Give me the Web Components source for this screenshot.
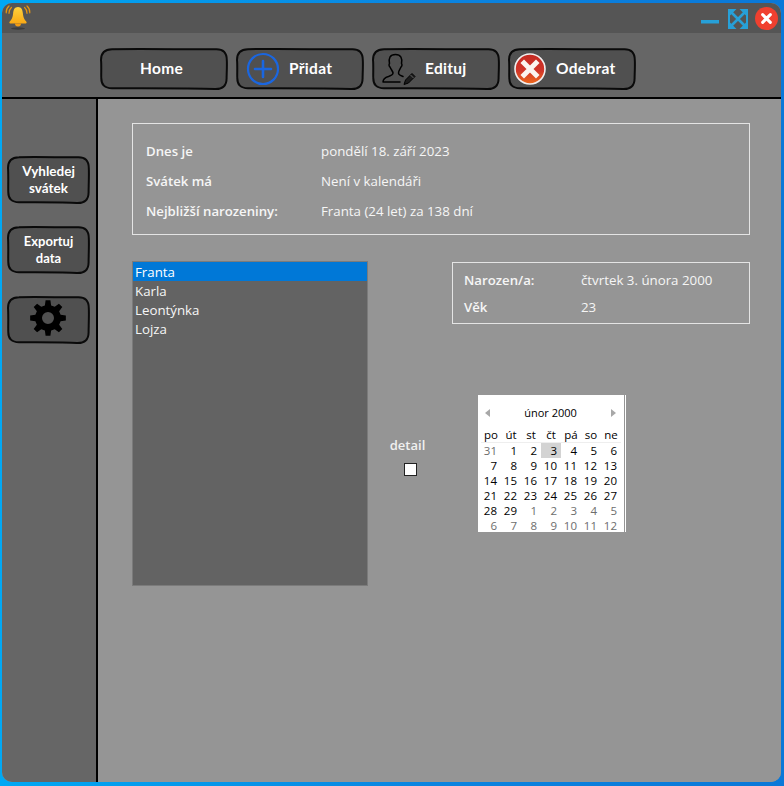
<!DOCTYPE html>
<html lang="cs"><head><meta charset="utf-8"><title>Svátky</title>
<style>
html,body{margin:0;padding:0;height:100%;background:#0a84dc}
body{font-family:"Open Sans","Noto Sans",sans-serif}
</style></head><body>
<app-window>
  <title-bar slot="title"></title-bar>
  <tool-bar slot="tools">
    <sketch-button w="128" h="42" label="Home"></sketch-button>
    <sketch-button w="128" h="42" label="Přidat" icon="plus"></sketch-button>
    <sketch-button w="128" h="42" label="Edituj" icon="user"></sketch-button>
    <sketch-button w="128" h="42" label="Odebrat" icon="x"></sketch-button>
  </tool-bar>
  <side-bar slot="side">
    <sketch-button w="83" h="48" small label="Vyhledej svátek" style="font-size:13.500px"></sketch-button>
    <sketch-button w="83" h="48" small label="Exportuj data"></sketch-button>
    <sketch-button w="83" h="48" icon="gear"></sketch-button>
  </side-bar>
  <main-panel slot="main"></main-panel>
</app-window>
<script>
const t=(html)=>{const e=document.createElement('template');e.innerHTML=html;return e};
class Base extends HTMLElement{
  constructor(){super();this.attachShadow({mode:'open'}).appendChild(this.constructor.tpl.content.cloneNode(true))}
}
class AppWindow extends Base{
  static tpl=t(`<style>
  :host{display:block;width:784px;height:786px;box-sizing:border-box;padding:3px 3px 4px 2px;background:linear-gradient(90deg,#00a8f4 0%,#0a84e0 55%,#0a78d8 100%);overflow:hidden}
  .win{height:100%;border-radius:10px;overflow:hidden;background:#959595;display:grid;grid-template-columns:96px 1fr;grid-template-rows:30px 64px 2px 1fr;}
  .t{grid-column:1/3}.b{grid-column:1/3}
  .line{grid-column:1/3;background:#000}
  .side{display:flex;min-height:0}
  .main{display:flex;min-height:0;min-width:0}
  ::slotted(*){flex:1}
  </style><div class="win"><div class="t"><slot name="title"></slot></div><div class="b"><slot name="tools"></slot></div><div class="line"></div><div class="side"><slot name="side"></slot></div><div class="main"><slot name="main"></slot></div></div>`);
}
class TitleBar extends Base{
  static tpl=t(`<style>
  :host{display:flex;height:30px;background:#555;align-items:flex-start;justify-content:space-between}
  .bell{margin:1px 0 0 3px;display:block}
  .ctl{display:flex;align-items:center;margin:4px 3px 0 0;}
  svg{display:block}
  </style>
  <svg class="bell" width="26" height="27" viewBox="0 0 26 27" aria-label="zvonek">
    <defs><linearGradient id="g" x1="0" x2="0" y1="0" y2="1"><stop offset="0" stop-color="#ffd23e"/><stop offset="1" stop-color="#f9a914"/></linearGradient></defs>
    <ellipse cx="13" cy="24.500" rx="7" ry="1.200" fill="#3c3c3c"/>
    <path d="M13 3c-3.400 0-4.600 2.800-4.900 6.500-.3 3.900-1.300 6-3.500 8.300-.5.600-.2 1.700.6 1.700h15.600c.8 0 1.100-1.100.6-1.700-2.200-2.300-3.200-4.400-3.500-8.300C17.600 5.800 16.400 3 13 3z" fill="url(#g)"/>
    <path d="M10 19.500a3 3 0 0 0 6 0z" fill="#f39c12"/>
    <g fill="none" stroke="#e8950f" stroke-width="1.200" stroke-linecap="round"><path d="M6.400 3.500C4.700 5 3.900 7 4 9.300"/><path d="M4 2C2 3.800 1 6.200 1.200 8.800"/><path d="M19.600 3.500C21.300 5 22.100 7 22 9.300"/><path d="M22 2c2 1.800 3 4.200 2.800 6.800"/></g>
  </svg>
  <div class="ctl">
    <svg width="18" height="23" viewBox="0 0 18 23" style="margin-right:9px"><rect x="0" y="13" width="18" height="3.500" fill="#27a0d8"/></svg>
    <svg width="20" height="20" viewBox="0 0 20 20" style="margin-right:7px"><g fill="#27a0d8"><path d="M0 0h8.500L0 8.500zM20 0v8.500L11.500 0zM0 20v-8.500L8.500 20zM20 20h-8.500l8.500-8.500z"/></g><path d="M3 3l14 14M17 3L3 17" stroke="#27a0d8" stroke-width="2.600"/><path d="M1 6v8M19 6v8" stroke="#27a0d8" stroke-width="2"/></svg>
    <svg width="23" height="23" viewBox="0 0 24 24"><circle cx="12" cy="12" r="12" fill="#f0402f"/><path d="M8 8l8 8M16 8l-8 8" stroke="#fff" stroke-width="3.200" stroke-linecap="round"/></svg>
  </div>`);
}
class ToolBar extends Base{
  static tpl=t(`<style>:host{display:flex;height:64px;background:#666;box-sizing:border-box;padding:15px 0 0 98px;gap:8px;align-items:flex-start}</style><slot></slot>`);
}
class SideBar extends Base{
  static tpl=t(`<style>:host{display:flex;flex-direction:column;background:#666;box-sizing:border-box;padding:57px 0 0 5px;gap:22px;border-right:2px solid #000}</style><slot></slot>`);
}
function gearPath(){
  const P=[];const n=8,ro=18,rr=13;
  for(let i=0;i<n;i++){
    const a=i*2*Math.PI/n-Math.PI/2,s=Math.PI/n;
    const pts=[[rr,a-s*.62],[ro,a-s*.34],[ro,a+s*.34],[rr,a+s*.62]];
    pts.forEach(([r,b])=>P.push((r*Math.cos(b)).toFixed(2)+' '+(r*Math.sin(b)).toFixed(2)));
  }
  return 'M'+P.join('L')+'zM0-6a6 6 0 1 0 0 12a6 6 0 0 0 0-12z';
}
const ICONS={
plus:`<svg width="34" height="34" viewBox="0 0 34 34"><circle cx="17" cy="17" r="15" fill="none" stroke="#1a66e0" stroke-width="2.200"/><path d="M17 9v16M9 17h16" stroke="#1a66e0" stroke-width="2.600" stroke-linecap="round"/></svg>`,
user:`<svg width="46" height="38" viewBox="0 0 46 38"><g fill="none" stroke="#000" stroke-width="1.500" stroke-linecap="round" stroke-linejoin="round"><path d="M27 32H10C10 29 12 27.500 15.500 26.500 18.500 25.500 20 24.500 20 23 20 21.500 18 19.500 17 17 16 16.500 15.700 14.500 16.500 13.500 15.500 8 17 4.500 22.500 4.500 28 4.500 29.500 8.500 28.500 13.500 29.300 14.500 29 16.500 28 17 27 19.500 25.500 21 25.500 23 25.500 24.500 27 25.500 30 26.500"/></g><path d="M31 34.500l1.500-4.500 6.500-6.500 3 3-6.500 6.500z" fill="#1c1c1c" stroke="#000" stroke-width="1"/><path d="M37.500 25l3 3" stroke="#777" stroke-width=".8"/></svg>`,
x:`<svg width="32" height="32" viewBox="0 0 32 32"><defs><linearGradient id="r" x1="0" x2="0" y1="0" y2="1"><stop offset="0" stop-color="#c42a22"/><stop offset=".55" stop-color="#d0352a"/><stop offset="1" stop-color="#ee6a1c"/></linearGradient></defs><circle cx="16" cy="16" r="15" fill="url(#r)" stroke="#f2eeee" stroke-width="1.600"/><path d="M10 10l12 12M22 10L10 22" stroke="#fbf4f0" stroke-width="5" stroke-linecap="square"/></svg>`,
gear:`<svg width="38" height="38" viewBox="-19 -19 38 38" style="margin:-4px 2px 0 0"><path fill="#000" fill-rule="evenodd" d="${gearPath()}"/></svg>`};
class SketchButton extends Base{
  static tpl=t(`<style>
  :host{display:block;position:relative;flex:none;color:#fff;font:700 15.500px/1 Lato,"Liberation Sans",sans-serif;letter-spacing:.3px}
  :host([small]){font-size:13px;letter-spacing:0}
  .bg{position:absolute;inset:0;display:block}
  .c{position:relative;height:100%;display:flex;align-items:center;justify-content:center;box-sizing:border-box;white-space:nowrap}
  :host([icon]) .c{justify-content:flex-start}
  .i{display:flex;align-items:center;justify-content:center;flex:none}
  .l{text-align:center}
  :host([small]) .c{line-height:17px;padding:0 6px;white-space:normal}
  </style><svg class="bg"></svg><div class="c"><span class="i"></span><span class="l"></span></div>`);
  connectedCallback(){
    const w=+this.getAttribute('w'),h=+this.getAttribute('h');
    this.style.width=w+'px';this.style.height=h+'px';
    const bg=this.shadowRoot.querySelector('.bg');
    bg.setAttribute('width',w);bg.setAttribute('height',h);bg.setAttribute('viewBox',`0 0 ${w} ${h}`);
    const r=11,R=w-1,B=h-1;
    bg.innerHTML=`<path d="M${r+1} 1.200C${w*.35} .6 ${w*.7} 1.500 ${R-r} 1.200Q${R-.3} .9 ${R-.2} ${r+1}C${R+.2} ${h*.4} ${R-.5} ${h*.7} ${R-.4} ${B-r}Q${R-.3} ${B+.3} ${R-r-1} ${B}C${w*.7} ${B-1} ${w*.3} ${B-.6} ${r+1} ${B-.8}Q1.200 ${B-.8} 1.300 ${B-r}C1 ${h*.7} 1.600 ${h*.4} 1 ${r+1}Q1 1.300 ${r+1} 1.200z" fill="#505050" stroke="#0a0a0a" stroke-width="2"/>`;
    const ic=this.getAttribute('icon'),i=this.shadowRoot.querySelector('.i'),l=this.shadowRoot.querySelector('.l');
    l.textContent=this.getAttribute('label')||'';
    const c=this.shadowRoot.querySelector('.c');
    if(ic==='gear'){c.style.justifyContent='center';i.innerHTML=ICONS.gear}
    else if(ic){i.innerHTML=ICONS[ic];
      const m={plus:[10,9],user:[1,6],x:[6,10]}[ic];
      c.style.paddingLeft=m[0]+'px';l.style.marginLeft=m[1]+'px'}
    else if(!this.hasAttribute('small')){c.style.paddingRight='5px'}
  }
}
class InfoBox extends Base{
  static tpl=t(`<style>
  :host{display:grid;box-sizing:border-box;border:1px solid #e4e4e4;color:#f6f6f6;font-size:13.300px;grid-template-columns:var(--lab) 1fr;padding:var(--pad);row-gap:var(--gap);line-height:var(--lh);align-content:start}
  </style><slot></slot>`);
}
class NameList extends Base{
  static tpl=t(`<style>
  :host{display:block;width:236px;height:325px;box-sizing:border-box;flex:none;background:#636363;border:1px solid #7b7b7b;color:#f6f6f6;font-size:13.300px;line-height:18px}
  ::slotted(div){padding:1px 0 0 2px}
  ::slotted(.sel){background:#0078d7;color:#fff}
  </style><slot></slot>`);
}
class CalView extends Base{
  static tpl=t(`<style>
  :host{display:block;width:146px;height:137px;background:#fff;box-sizing:border-box;color:#000;font-size:11.500px;overflow:hidden;box-shadow:1px 0 0 #959595,2px 0 0 #fff}
  .h{display:flex;justify-content:space-between;align-items:center;height:18px;margin:9px 8px 0 7px;line-height:18px;font-size:11px}
  .h i{width:0;height:0;border:4px solid transparent;display:block}
  .p{border-right:5px solid #a8a8a8!important;border-left:0!important}
  .n{border-left:5px solid #a8a8a8!important;border-right:0!important}
  .g{display:grid;grid-template-columns:repeat(7,20px);margin-left:3px;justify-content:start}
  .wk{margin-top:5px;height:15px;line-height:15px;border-bottom:1px solid #eee;width:140px;box-sizing:content-box}
  .wk span{text-align:center}
  .d{line-height:15px;height:15px;text-align:right;padding-right:4px;box-sizing:border-box}
  .o{color:#6d6d6d}.s{background:#d3d3d3}
  </style>
  <div class="h"><i class="p"></i><span>únor 2000</span><i class="n"></i></div>
  <div class="g wk" id="w"></div><div class="g" id="b"></div>`);
  connectedCallback(){
    const R=this.shadowRoot;
    R.getElementById('w').innerHTML=['po','út','st','čt','pá','so','ne'].map(x=>`<span>${x}</span>`).join('');
    const days=[[31,1],...Array.from({length:29},(_,i)=>[i+1,0]),...Array.from({length:12},(_,i)=>[i+1,1])];
    R.getElementById('b').innerHTML=days.map(([d,o],i)=>`<span class="d${o?' o':''}${i==3?' s':''}">${d}</span>`).join('');
  }
}
class CheckField extends Base{
  static tpl=t(`<style>
  :host{display:flex;flex-direction:column;align-items:center;color:#f0f0f0;font:600 13px/16px "Open Sans",sans-serif}
  span{padding-right:5px}
  i{display:block;width:11px;height:11px;border:1px solid #222;background:#fff;margin-top:10px}
  </style><span><slot></slot></span><i></i>`);
}
class MainPanel extends Base{
  static tpl=t(`<style>
  :host{display:block;background:#959595;box-sizing:border-box;padding:24px 31px 0 34px;color:#f4f4f4}
  .top{--lab:175px;--pad:17px 13px 0 13px;--gap:10px;--lh:20px;height:112px}
  .row{display:flex;margin-top:26px}
  .mid{width:84px;flex:none;padding-top:176px;box-sizing:border-box}
  .r{flex:1}
  .box{--lab:117px;--pad:7px 11px 0 11px;--gap:7px;--lh:20px;height:62px;margin-top:1px}
  cal-view{margin:71px 0 0 26px}
  b{font-weight:600;font-size:13.200px}
  </style>
  <info-box class="top"><b>Dnes je</b><span>pondělí 18. září 2023</span><b>Svátek má</b><span>Není v kalendáři</span><b>Nejbližší narozeniny:</b><span>Franta (24 let) za 138 dní</span></info-box>
  <div class="row">
    <name-list><div class="sel">Franta</div><div>Karla</div><div>Leontýnka</div><div>Lojza</div></name-list>
    <div class="mid"><check-field>detail</check-field></div>
    <div class="r"><info-box class="box"><b>Narozen/a:</b><span>čtvrtek 3. února 2000</span><b>Věk</b><span>23</span></info-box><cal-view></cal-view></div>
  </div>`);
}
[['app-window',AppWindow],['title-bar',TitleBar],['tool-bar',ToolBar],['side-bar',SideBar],['sketch-button',SketchButton],['info-box',InfoBox],['name-list',NameList],['cal-view',CalView],['check-field',CheckField],['main-panel',MainPanel]].forEach(([n,c])=>customElements.define(n,c));
</script>
</body></html>
